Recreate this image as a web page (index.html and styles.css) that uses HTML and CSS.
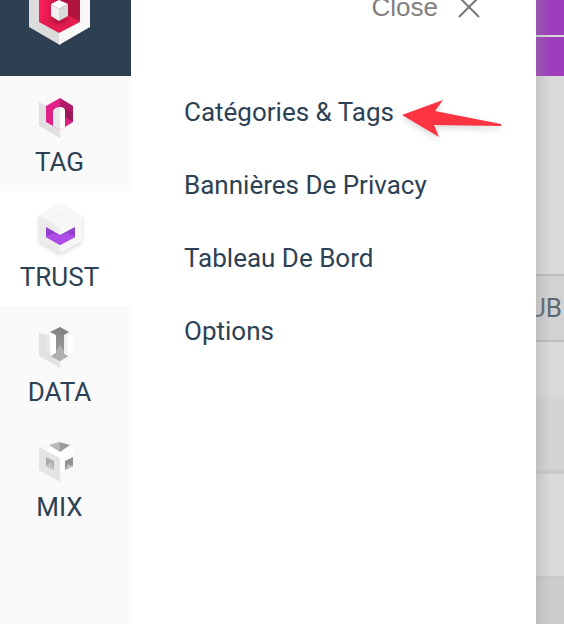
FILE: index.html
```html
<!DOCTYPE html>
<html lang="fr">
<head>
<meta charset="utf-8">
<title>Trust</title>
<link rel="stylesheet" href="styles.css">
</head>
<body>
<nav class="sidebar" aria-label="Produits">
  <a class="brand" href="#" aria-label="Accueil">
    <svg width="62" height="46" viewBox="0 0 62 46">
      <defs>
        <radialGradient id="floor"><stop offset="0" stop-color="#a8123a"/><stop offset="1" stop-color="#e51c4e"/></radialGradient>
        <linearGradient id="wall"><stop offset="0" stop-color="#ff1f58"/><stop offset="1" stop-color="#c2154a"/></linearGradient>
      </defs>
      <path fill="#dcdcdc" d="M0 0H31V45L0 27Z"/>
      <path fill="#f8f8f8" d="M30 0H61V27L30 45Z"/>
      <path fill="url(#wall)" d="M10 0H31V14L10 22Z"/>
      <path fill="#b0143f" d="M30 0H51V22L30 12Z"/>
      <path fill="#e51c4e" d="M10 22L30 10L51 22L30 33Z"/>
      <ellipse fill="url(#floor)" cx="30" cy="20" rx="13" ry="6"/>
      <path fill="#fff" d="M22 4L30 0L39 4L30 9Z"/>
      <path fill="#f0f0f0" d="M22 4L30 9V21L22 16Z"/>
      <path fill="#d9d9d9" d="M39 4L30 9V21L39 16Z"/>
    </svg>
  </a>
  <a class="product" href="#">
    <svg width="50" height="56" viewBox="0 0 50 56">
      <path fill="#f8f8f8" d="M25 3L46 14V38L25 50L4 38V14Z"/>
      <path fill="#e1e1e1" d="M4 14L11 18V34L25 42V50L4 38Z"/>
      <path fill="#e2208a" d="M11 18L25 10V42L11 34Z"/>
      <path fill="#b01a66" d="M25 10L38 18V26L25 19Z"/>
      <path fill="#9c1a5c" d="M25 18L38 25V34L25 30Z"/>
      <path fill="#dc1f80" d="M25 26L38 34L25 42Z"/>
      <path fill="#e8e8e8" d="M18 23Q20 19 25 19V42L18 38Z"/>
      <path fill="#fff" d="M25 19Q30 19 30 23V39L25 42Z"/>
    </svg>
    <span>TAG</span>
  </a>
  <a class="product product-active" href="#" aria-current="page">
    <svg class="cube" width="50" height="56" viewBox="0 0 50 56">
      <path fill="#f7f7f7" d="M25 1L47 13L25 26L4 13Z"/>
      <path fill="#ebebeb" d="M4 13L25 25V50L4 38Z"/>
      <path fill="#f7f7f7" d="M47 13L25 25V50L47 38Z"/>
      <path fill="#9341cc" d="M11 24L25 32L40 24V34L25 42L11 34Z"/>
      <path fill="#ad4ce6" d="M11 33L20 30L25 33L31 30L40 33V34L25 42L11 34Z"/>
      <path fill="none" stroke="#e2e2e2" stroke-dasharray="1 2" d="M11 17L25 10L39 17"/>
    </svg>
    <span>TRUST</span>
  </a>
  <a class="product" href="#">
    <svg width="50" height="56" viewBox="0 0 50 56">
      <defs>
        <linearGradient id="shaft" x2="0" y2="1"><stop offset="0" stop-color="#808080"/><stop offset="1" stop-color="#a2a2a2"/></linearGradient>
      </defs>
      <path fill="#f8f8f8" d="M25 3L46 14V38L25 50L4 38V14Z"/>
      <path fill="#e2e2e2" d="M4 14L16 20V37L25 42V50L4 38Z"/>
      <path fill="url(#shaft)" d="M15 14L25 9L34 14L29 18V36L33 38L25 43L16 38L21 35V18Z"/>
      <path fill="#b0b0b0" d="M21 33L25 27L29 33V36L33 38L25 43L16 38L21 35Z"/>
      <path fill="#e8e8e8" d="M11 18Q12 15 16 15V37L11 33Z"/>
      <path fill="#fff" d="M14 15Q21 15 21 19V34L16 38Z"/>
      <path fill="#f0f0f0" d="M29 17L35 14V37L29 35Z"/>
      <path fill="#fff" d="M32 16L38 18V34L33 38Z"/>
    </svg>
    <span>DATA</span>
  </a>
  <a class="product" href="#">
    <svg width="50" height="56" viewBox="0 0 50 56">
      <path fill="#f8f8f8" d="M25 3L46 14V38L25 50L4 38V14Z"/>
      <path fill="#fff" d="M11 17L25 9L38 17V33L25 41L11 33Z"/>
      <path fill="#e4e4e4" d="M4 14L25 25V49L4 37Z"/>
      <path fill="#b8b8b8" d="M14 12L24 9L25 19Z"/>
      <path fill="#989898" d="M24 9L35 12L25 19Z"/>
      <path fill="#adadad" d="M11 24L19 28V37L11 33Z"/>
      <path fill="#c6c6c6" d="M11 33L16 29L19 37Z"/>
      <path fill="#929292" d="M30 28L38 24V33L30 37Z"/>
      <path fill="#bdbdbd" d="M30 37L33 31L38 33Z"/>
    </svg>
    <span>MIX</span>
  </a>
</nav>
<main class="panel">
  <button class="close" type="button">Close
    <svg width="22" height="22" viewBox="0 0 22 22"><path d="M1 1L21 21M21 1L1 21"/></svg>
  </button>
  <ul class="menu">
    <li><a href="#">Catégories &amp; Tags</a>
      <svg class="pointer" width="100" height="40" viewBox="0 0 100 40"><path d="M0 16L41 1L33 12L99 25V27L32 26L37 38Z"/></svg>
    </li>
    <li><a href="#">Bannières De Privacy</a></li>
    <li><a href="#">Tableau De Bord</a></li>
    <li><a href="#">Options</a></li>
  </ul>
</main>
<aside class="backdrop">
  <div class="bar bar-top"></div>
  <div class="bar"></div>
  <div class="blank"></div>
  <div class="heading">UB</div>
  <div class="row"></div>
  <div class="row row-alt"></div>
  <div class="row row-tall"></div>
  <div class="row row-last"></div>
</aside>
</body>
</html>
```
FILE: styles.css
```css
* {
  box-sizing: border-box;
}

body {
  margin: 0;
  min-height: 100vh;
  display: flex;
  overflow: hidden;
  background: #fff;
  color: #2d4154;
  font: 26px/30px Roboto, sans-serif;
}

a {
  color: inherit;
  text-decoration: none;
}

svg {
  display: block;
}

.sidebar {
  flex: 0 0 131px;
  background: #fafafa;
}

.brand {
  display: block;
  height: 76px;
  padding-left: 29px;
  background: #2d4051;
}

.product {
  display: flex;
  flex-direction: column;
  align-items: center;
  gap: 3px;
  height: 115px;
  padding: 12px 12px 0 0;
}

.product-active {
  background: #fff;
}

.cube {
  filter: drop-shadow(0 2px 2px rgba(0, 0, 0, 0.15));
}

.panel {
  flex: 1;
  padding: 0 53px;
}

.close {
  display: flex;
  align-items: center;
  gap: 20px;
  margin: -8px 3px 0 auto;
  padding: 0;
  border: 0;
  background: none;
  color: #808080;
  font: 26px/30px "Liberation Sans", sans-serif;
}

.close path {
  fill: none;
  stroke: #777;
  stroke-width: 2;
}

.menu {
  display: grid;
  gap: 43px;
  margin: 75px 0 0;
  padding: 0;
  list-style: none;
  white-space: nowrap;
}

.menu li {
  position: relative;
}

.pointer {
  position: absolute;
  left: 218px;
  top: 2px;
  overflow: visible;
  filter: drop-shadow(0 3px 3px rgba(0, 0, 0, 0.15));
}

.pointer path {
  fill: #fc3441;
}

.backdrop {
  position: relative;
  flex: 0 0 28px;
  display: flex;
  flex-direction: column;
  overflow: hidden;
  background: #d9d9d9;
}

.backdrop::after {
  content: "";
  position: absolute;
  inset: 0;
  background: linear-gradient(90deg, rgba(150, 150, 150, 0.3), rgba(150, 150, 150, 0) 14px);
}

.bar {
  height: 39px;
  background: #9d3dbb;
}

.bar-top {
  height: 37px;
  border-bottom: 2px solid #d9d9d9;
}

.blank {
  height: 198px;
}

.heading {
  display: flex;
  justify-content: flex-end;
  align-items: center;
  height: 68px;
  padding-right: 2px;
  border: solid #bbb;
  border-width: 2px 0;
  background: #d2d2d2;
  color: #5b6873;
}

.row {
  height: 55px;
}

.row-alt {
  height: 77px;
  border-bottom: 4px solid #cacaca;
  background: #d3d3d3;
}

.row-tall {
  height: 104px;
  border-bottom: 2px solid #c9c9c9;
}

.row-last {
  flex: 1;
  background: #cdcdcd;
}
```
